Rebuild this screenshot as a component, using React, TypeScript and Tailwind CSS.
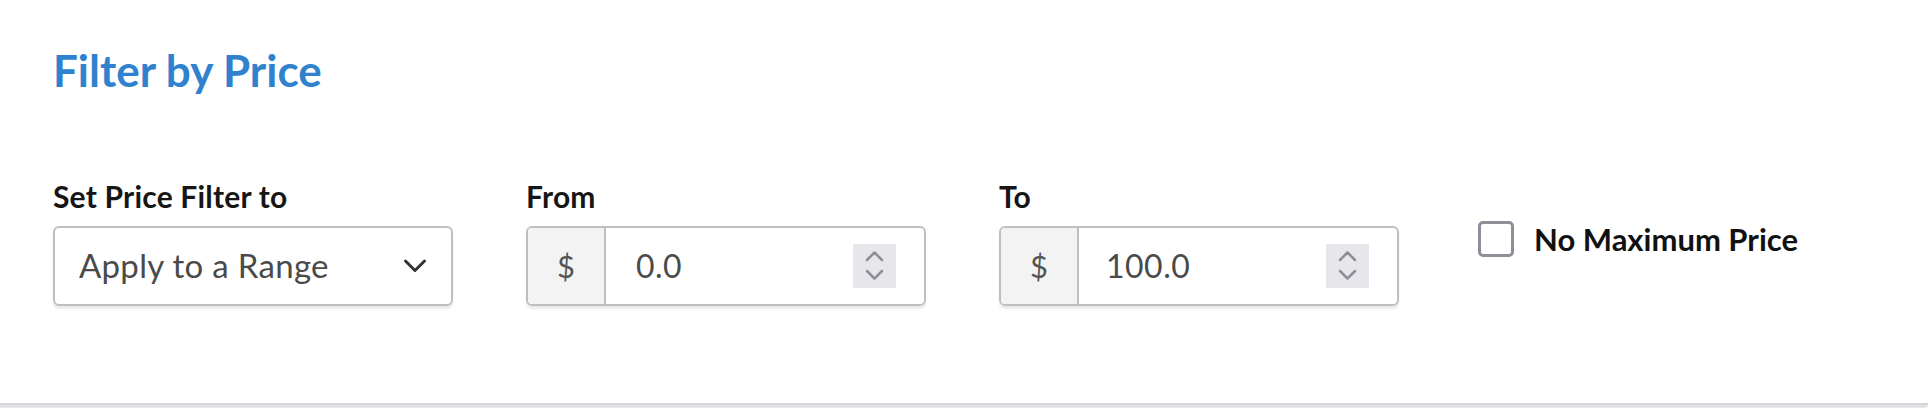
function Spinner() {
  return (
    <div className="flex h-[44px] w-[43px] items-center justify-center bg-[#e7e6eb]">
      <svg width="43" height="44" viewBox="0 0 43 44" fill="none">
        <path d="M14 16 L21.5 8.5 L29 16" stroke="#8e8e99" strokeWidth="2.5" strokeLinecap="round" strokeLinejoin="round" />
        <path d="M14 27 L21.5 34.5 L29 27" stroke="#8e8e99" strokeWidth="2.5" strokeLinecap="round" strokeLinejoin="round" />
      </svg>
    </div>
  )
}

function PriceInput({ label, value, padLeft }: { label: string; value: string; padLeft: string }) {
  return (
    <div className="flex w-[400px] flex-col">
      <span className="text-[30px] leading-none font-bold tracking-[0.2px] text-[#161616]">{label}</span>
      <div className="mt-[15px] flex h-[80px] overflow-hidden rounded-[6px] border-2 border-[#bfbfbf] shadow-[0_3px_2px_rgba(0,0,0,0.08)]">
        <div className="flex w-[78px] items-center justify-center border-r-2 border-[#bfbfbf] bg-[#f3f3f3] text-[31px] text-[#555]">
          $
        </div>
        <div className={`flex flex-1 items-center pr-[28px] ${padLeft}`}>
          <span className="flex-1 text-[32px] tracking-[0.5px] text-[#4a4a4a]">{value}</span>
          <Spinner />
        </div>
      </div>
    </div>
  )
}

export default function App() {
  return (
    <div className="h-[408px] w-full bg-white font-['Lato',sans-serif]">
      <div className="h-[403px] px-[53px] pt-[48px]">
        <h2 className="text-[44px] leading-none font-bold text-[#3182ce]">Filter by Price</h2>

        <div className="mt-[89px] flex gap-[73px]">
          <div className="flex w-[400px] flex-col">
            <span className="text-[30px] leading-none font-bold tracking-[0.2px] text-[#161616]">Set Price Filter to</span>
            <div className="mt-[15px] flex h-[80px] items-center justify-between rounded-[6px] border-2 border-[#bfbfbf] pr-[24px] pl-[24px] shadow-[0_3px_2px_rgba(0,0,0,0.08)]">
              <span className="text-[33px] tracking-[0.3px] text-[#4a4a4a]">Apply to a Range</span>
              <svg width="24" height="16" viewBox="0 0 24 16" fill="none">
                <path d="M2.5 3 L12 12.5 L21.5 3" stroke="#333" strokeWidth="3" strokeLinecap="round" strokeLinejoin="round" />
              </svg>
            </div>
          </div>

          <PriceInput label="From" value="0.0" padLeft="pl-[30px]" />
          <PriceInput label="To" value="100.0" padLeft="pl-[27px]" />

          <label className="ml-[6px] flex items-center gap-[20px] self-start pt-[40px]">
            <span className="h-[36px] w-[36px] rounded-[5px] border-[3px] border-[#8e8e99] bg-white" />
            <span className="text-[31px] leading-none font-bold text-[#111]">No Maximum Price</span>
          </label>
        </div>
      </div>
      <div className="h-[5px] rounded-br-[4px] bg-gradient-to-b from-[#d2d2d6] to-[#e8e8eb]" />
    </div>
  )
}
